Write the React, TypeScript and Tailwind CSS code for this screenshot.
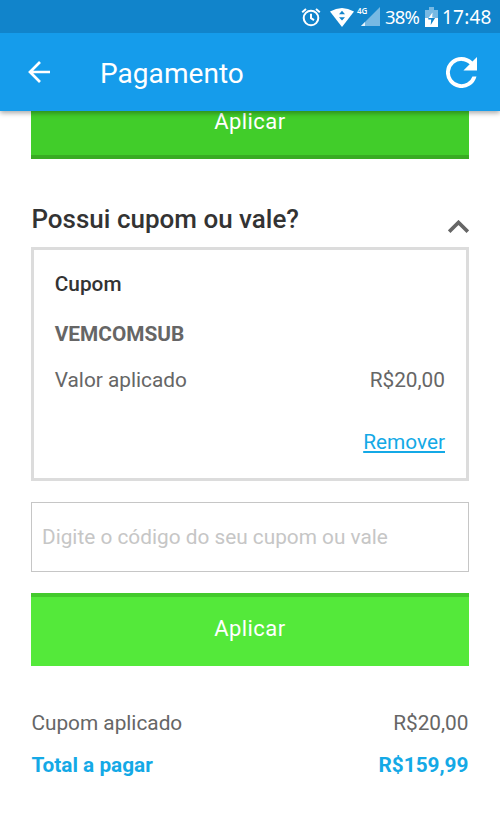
import React from "react";

function StatusBar() {
  return (
    <div className="flex h-[33px] items-center bg-[#1184cb] pl-[301px] text-white">
      <svg width="20" height="20" viewBox="0 0 20 20" fill="none" stroke="#fff" strokeWidth="2">
        <circle cx="10" cy="11" r="7.3" />
        <path d="M10 6.8V11.2l3 1.9M1.2 5.2 5 2M18.8 5.2 15 2" />
      </svg>
      <svg className="ml-[9px]" width="24" height="20" viewBox="0 0 24 20">
        <path d="M0 4.6Q12-2.6 24 4.6L12 20Z" fill="#fff" />
        <path d="M12 3.8l3 3.4H9ZM12 13.6l3-3.4H9Z" fill="#1184cb" />
      </svg>
      <div className="relative ml-[5px] h-[20px] w-[21px]">
        <svg width="21" height="20" viewBox="0 0 21 20">
          <path d="M21 0V19H2Z" fill="#77b9e3" />
          <path d="M6 15V19H2Z" fill="#e5f4fc" />
        </svg>
        <span className="absolute -left-[2px] -top-px font-['Noto_Sans',sans-serif] text-[8px] font-semibold leading-[9px]">4G</span>
      </div>
      <span className="ml-[5px] w-[36px] whitespace-nowrap font-['Noto_Sans',sans-serif] text-[18.5px] leading-[22px] tracking-[-0.8px]">38%</span>
      <svg className="ml-[4px]" width="13" height="20" viewBox="0 0 13 20">
        <path d="M4 0h5v3h4v17H0V3h4Z" fill="#77b9e3" />
        <path d="M0 11h13v9H0Z" fill="#fff" />
        <path d="M3.3 11h6.8L5.7 18l.5-5.5H3.3Z" fill="#1184cb" />
        <path d="M7.5 5.5 3.6 11h6.6L7.2 10.6Z" fill="#fff" />
      </svg>
      <span className="ml-[4px] whitespace-nowrap font-['Noto_Sans',sans-serif] text-[19px] leading-[22px] tracking-[0.2px]">17:48</span>
    </div>
  );
}

function AppBar() {
  return (
    <div className="flex h-[78px] items-center bg-[#159ceb] pl-[28px] pr-[23px] text-white">
      <svg width="23" height="22" viewBox="0 0 23 22" fill="none" stroke="#fff" strokeWidth="2.7">
        <path d="M12 1 2 11l10 10M2 11h20" />
      </svg>
      <h1 className="ml-[49px] mt-[3px] text-[28px] font-normal leading-[34px] tracking-[0.05px]">Pagamento</h1>
      <svg className="ml-auto" width="31" height="31" viewBox="4 4 16 16" fill="#fff">
        <path d="M17.65 6.35A7.96 7.96 0 0 0 12 4a8 8 0 1 0 7.73 10h-2.08A6 6 0 1 1 12 6c1.66 0 3.14.69 4.22 1.78L13 11h7V4z" />
      </svg>
    </div>
  );
}

export default function App() {
  return (
    <div className="h-[828px] w-[500px] overflow-hidden bg-white font-['Roboto',sans-serif] text-[20.8px] leading-[24px] text-[#666]">
      <header className="relative shadow-[0_2px_5px_rgba(0,0,0,0.35)]">
        <StatusBar />
        <AppBar />
      </header>
      <main className="pl-[31.4px] pr-[31.5px]">
        <button className="flex h-[48px] w-full justify-center border-b-4 border-[#38ab22] bg-[#41cd2a] text-[22px] text-white">
          <span className="-mt-px tracking-[0.4px]">Aplicar</span>
        </button>
        <section>
          <div className="flex h-[88px] items-start justify-between pt-[45px]">
            <h2 className="text-[26px] font-medium leading-[30px] text-[#333]">Possui cupom ou vale?</h2>
            <svg className="mt-[16px]" width="21" height="13" viewBox="0 0 21 13" fill="none" stroke="#666" strokeWidth="3.6">
              <path d="M1.2 11.6 10.5 2.4l9.3 9.2" />
            </svg>
          </div>
          <div className="h-[234px] border-[3px] border-[#dcdcdc] pl-[20.4px] pr-[20.5px] pt-[22px]">
            <h3 className="font-medium text-[#333]">Cupom</h3>
            <p className="mt-[26px] font-bold">VEMCOMSUB</p>
            <div className="mt-[22px] flex justify-between">
              <span>Valor aplicado</span>
              <span>R$20,00</span>
            </div>
            <div className="mt-[38px] flex justify-end">
              <a className="text-[#14a9e6] underline decoration-2 underline-offset-[2px]">Remover</a>
            </div>
          </div>
          <input
            className="mt-[21px] block h-[70px] w-full border border-[#c6c6c6] px-[9.6px] placeholder:text-[#c6c6c6]"
            placeholder="Digite o código do seu cupom ou vale"
          />
          <button className="mt-[21px] flex h-[73px] w-full items-center justify-center border-t-4 border-[#43c92c] bg-[#54e93a] text-[22px] text-white">
            <span className="-mt-[5px] tracking-[0.4px]">Aplicar</span>
          </button>
        </section>
        <section className="pt-[45px]">
          <div className="flex justify-between">
            <span>Cupom aplicado</span>
            <span>R$20,00</span>
          </div>
          <div className="mt-[18px] flex justify-between font-bold text-[#14a9e6]">
            <span>Total a pagar</span>
            <span>R$159,99</span>
          </div>
        </section>
      </main>
    </div>
  );
}
